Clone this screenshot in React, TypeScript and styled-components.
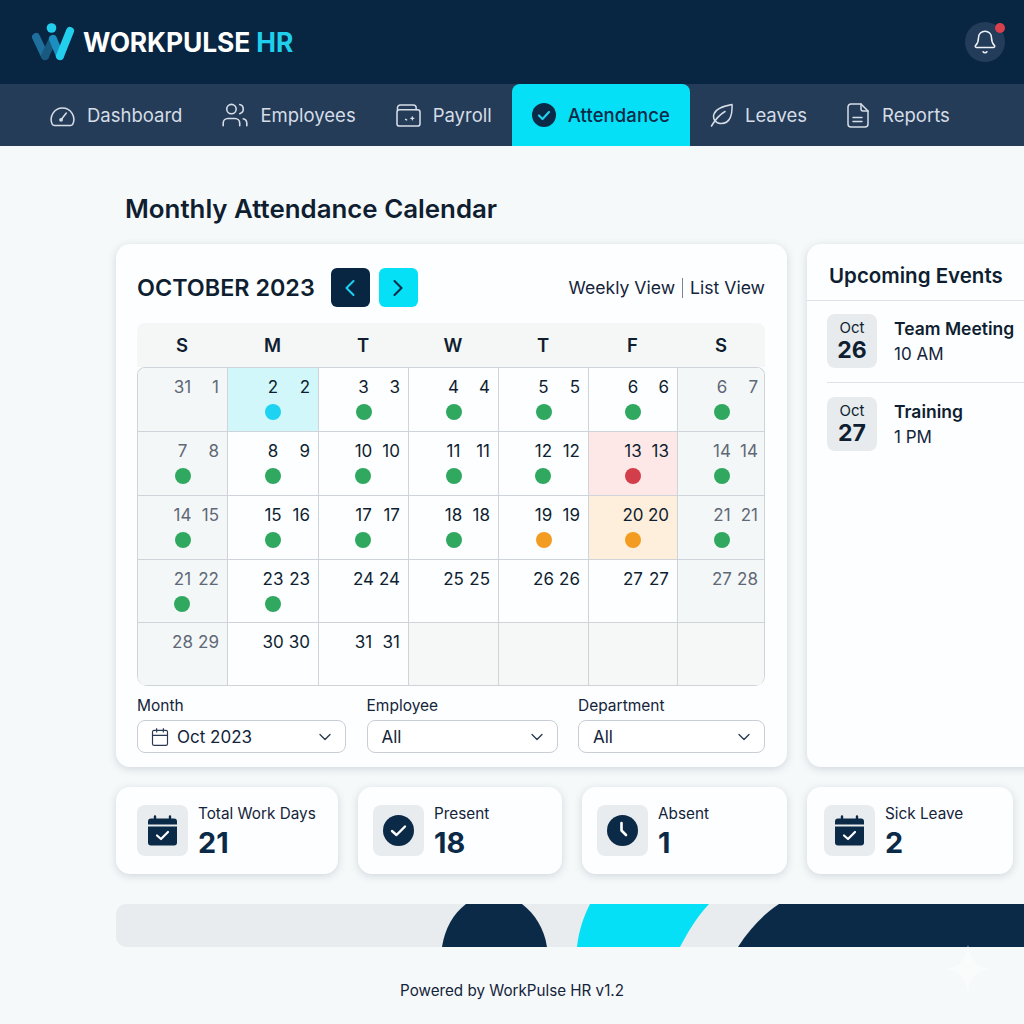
import * as React from 'react';
import styled, { createGlobalStyle } from 'styled-components';
import { Bell, Calendar, ChevronDown, ChevronLeft, ChevronRight, Users } from 'lucide-react';

const GlobalStyle = createGlobalStyle`
  html, body {
    margin: 0;
    padding: 0;
    width: 1024px;
    height: 1024px;
    overflow: hidden;
    background: #f6f9fa;
    font-family: "Inter", "Liberation Sans", sans-serif;
    color: #0f1e30;
  }
  * { box-sizing: border-box; }
`;

type Tone = 'plain' | 'weekend' | 'today' | 'absent' | 'late' | 'empty';
type DotColor = 'green' | 'cyan' | 'red' | 'orange';

interface Day {
  a?: string;
  b?: string;
  tone?: Tone;
  dot?: DotColor;
}

const weeks: Day[][] = [
  [
    { a: '31', b: '1', tone: 'weekend' },
    { a: '2', b: '2', tone: 'today', dot: 'cyan' },
    { a: '3', b: '3', dot: 'green' },
    { a: '4', b: '4', dot: 'green' },
    { a: '5', b: '5', dot: 'green' },
    { a: '6', b: '6', dot: 'green' },
    { a: '6', b: '7', tone: 'weekend', dot: 'green' },
  ],
  [
    { a: '7', b: '8', tone: 'weekend', dot: 'green' },
    { a: '8', b: '9', dot: 'green' },
    { a: '10', b: '10', dot: 'green' },
    { a: '11', b: '11', dot: 'green' },
    { a: '12', b: '12', dot: 'green' },
    { a: '13', b: '13', tone: 'absent', dot: 'red' },
    { a: '14', b: '14', tone: 'weekend', dot: 'green' },
  ],
  [
    { a: '14', b: '15', tone: 'weekend', dot: 'green' },
    { a: '15', b: '16', dot: 'green' },
    { a: '17', b: '17', dot: 'green' },
    { a: '18', b: '18', dot: 'green' },
    { a: '19', b: '19', dot: 'orange' },
    { a: '20', b: '20', tone: 'late', dot: 'orange' },
    { a: '21', b: '21', tone: 'weekend', dot: 'green' },
  ],
  [
    { a: '21', b: '22', tone: 'weekend', dot: 'green' },
    { a: '23', b: '23', dot: 'green' },
    { a: '24', b: '24' },
    { a: '25', b: '25' },
    { a: '26', b: '26' },
    { a: '27', b: '27' },
    { a: '27', b: '28', tone: 'weekend' },
  ],
  [
    { a: '28', b: '29', tone: 'weekend' },
    { a: '30', b: '30' },
    { a: '31', b: '31' },
    { tone: 'empty' },
    { tone: 'empty' },
    { tone: 'empty' },
    { tone: 'empty' },
  ],
];

const toneColors: Record<Tone, string> = {
  plain: 'transparent',
  weekend: '#f4f7f7',
  today: '#d2f7fb',
  absent: '#fde8e7',
  late: '#feefdc',
  empty: '#f6f8f8',
};

const dotColors: Record<DotColor, string> = {
  green: '#30a860',
  cyan: '#1ed3f2',
  red: '#d23f4b',
  orange: '#f29c22',
};

const Page = styled.div`
  width: 1024px;
  height: 1024px;
  overflow: hidden;
`;

const TopBar = styled.header`
  height: 84px;
  background: #082542;
  display: flex;
  align-items: center;
  justify-content: space-between;
  padding: 0 19px 0 31px;
`;

const Brand = styled.div`
  display: flex;
  align-items: center;
  gap: 8px;
`;

const BrandName = styled.div`
  font-size: 26.4px;
  font-weight: 700;
  letter-spacing: -0.1px;
  color: #ffffff;
  span { color: #1fd0ee; }
`;

const BellButton = styled.div`
  position: relative;
  width: 40px;
  height: 40px;
  border-radius: 50%;
  background: #233c59;
  color: #eef2f6;
  display: flex;
  align-items: center;
  justify-content: center;
`;

const BellDot = styled.span`
  position: absolute;
  top: 1px;
  right: 0;
  width: 10px;
  height: 10px;
  border-radius: 50%;
  background: #d8404c;
`;

const NavBar = styled.nav`
  height: 62px;
  background: #243c58;
  display: flex;
  padding-left: 30px;
`;

const NavItem = styled.div<{ $active?: boolean }>`
  display: flex;
  align-items: center;
  gap: 12px;
  padding: 0 20px;
  font-size: 18.5px;
  font-weight: ${p => (p.$active ? 500 : 400)};
  letter-spacing: ${p => (p.$active ? '0.1px' : '0')};
  color: ${p => (p.$active ? '#0b2a48' : '#d6dde6')};
  background: ${p => (p.$active ? '#05e0f6' : 'transparent')};
  border-radius: ${p => (p.$active ? '8px 8px 0 0' : '0')};
`;

const Main = styled.main`
  padding: 47px 0 0 116px;
`;

const PageTitle = styled.h1`
  margin: 0 0 19px 9px;
  font-size: 25.85px;
  line-height: 32px;
  font-weight: 600;
  color: #0f1e30;
`;

const Columns = styled.div`
  display: flex;
  gap: 20px;
`;

const Card = styled.section`
  background: #fdfeff;
  border-radius: 14px;
  box-shadow: 0 2px 8px rgba(40, 60, 90, 0.18);
`;

const CalendarCard = styled(Card)`
  width: 671px;
  height: 523px;
  padding: 24px 22px 0 21px;
`;

const CalendarHead = styled.div`
  display: flex;
  align-items: center;
  height: 39px;
  margin-bottom: 16px;
`;

const MonthTitle = styled.h2`
  margin: 0 16px 0 0;
  font-size: 23.35px;
  font-weight: 600;
  white-space: nowrap;
`;

const ArrowButton = styled.button<{ $dark?: boolean }>`
  width: 39px;
  height: 39px;
  margin-right: 9px;
  padding: 0;
  border: 0;
  border-radius: 6px;
  display: flex;
  align-items: center;
  justify-content: center;
  background: ${p => (p.$dark ? '#082542' : '#05e0f6')};
  color: ${p => (p.$dark ? '#1fd0ee' : '#0b2a48')};
`;

const ViewLinks = styled.div`
  margin-left: auto;
  font-size: 17.6px;
  color: #14243a;
  display: flex;
  align-items: center;
  gap: 7px;
`;

const ViewSep = styled.span`
  width: 1px;
  height: 20px;
  background: #7d8794;
`;

const WeekHead = styled.div`
  display: grid;
  grid-template-columns: 90px 91px 90px 90px 90px 89px 88px;
  height: 44px;
  background: #f5f7f7;
  border-radius: 8px 8px 0 0;
`;

const WeekDay = styled.div`
  display: flex;
  align-items: center;
  justify-content: center;
  font-size: 18.5px;
  font-weight: 600;
`;

const MonthGrid = styled.div`
  display: grid;
  grid-template-columns: 90px 91px 90px 90px 90px 89px 88px;
  grid-template-rows: 64px 64px 64px 63px 63px;
  width: 628px;
  border: 1px solid #cfd3da;
  border-width: 1px 1px 0 1px;
  border-radius: 8px 8px 10px 10px;
  overflow: hidden;
`;

const Cell = styled.div<{ $tone: Tone }>`
  display: grid;
  grid-template-columns: 1fr auto 1fr;
  grid-template-rows: 22px 16px;
  row-gap: 6px;
  align-content: start;
  padding: 8px 8px 0;
  background: ${p => toneColors[p.$tone]};
  border-right: 1px solid #cfd3da;
  border-bottom: 1px solid #cfd3da;
  font-size: 17px;
  line-height: 22px;
  color: ${p => (p.$tone === 'weekend' ? '#5f6876' : '#0f1e30')};
  &:nth-child(7n) { border-right: 0; }
`;

const DayNum = styled.span`
  grid-column: 2;
  grid-row: 1;
  justify-self: center;
`;

const DayAlt = styled.span`
  grid-column: 3;
  grid-row: 1;
  justify-self: end;
`;

const Dot = styled.span<{ $color: DotColor }>`
  grid-column: 2;
  grid-row: 2;
  justify-self: center;
  width: 16px;
  height: 16px;
  border-radius: 50%;
  background: ${p => dotColors[p.$color]};
`;

const Filters = styled.div`
  display: grid;
  grid-template-columns: 209px 191px 187px;
  column-gap: 20.5px;
  margin-top: 10px;
`;

const FilterLabel = styled.div`
  font-size: 15.5px;
  line-height: 19px;
  margin-bottom: 5px;
  color: #14243a;
`;

const SelectBox = styled.div<{ $icon?: boolean }>`
  height: 33px;
  display: flex;
  align-items: center;
  gap: 7px;
  padding: 0 10px 0 ${p => (p.$icon ? '12px' : '14px')};
  border: 1px solid #c9ced6;
  border-radius: 8px;
  background: #ffffff;
  font-size: 17px;
  color: #14243a;
  svg { color: #2a3a50; }
  svg:last-child { margin-left: auto; }
`;

const EventsCard = styled(Card)`
  width: 260px;
  flex-shrink: 0;
`;

const EventsTitle = styled.h2`
  margin: 0;
  height: 57px;
  padding: 6px 0 0 22px;
  display: flex;
  align-items: center;
  font-size: 20.5px;
  font-weight: 600;
  border-bottom: 1px solid #dfe3e9;
`;

const EventList = styled.div`
  padding: 13px 0 0 20px;
`;

const EventRow = styled.div<{ $divided?: boolean }>`
  display: flex;
  gap: 17px;
  padding-bottom: ${p => (p.$divided ? '14px' : '0')};
  margin-bottom: ${p => (p.$divided ? '14px' : '0')};
  border-bottom: ${p => (p.$divided ? '1px solid #dfe3e9' : '0')};
`;

const DateBadge = styled.div`
  width: 50px;
  height: 54px;
  border-radius: 8px;
  background: #e7ebee;
  display: flex;
  flex-direction: column;
  align-items: center;
  justify-content: center;
`;

const BadgeMonth = styled.span`
  font-size: 15px;
  line-height: 18px;
`;

const BadgeDay = styled.span`
  font-size: 23px;
  line-height: 26px;
  font-weight: 700;
`;

const EventText = styled.div`
  padding-top: 3px;
`;

const EventName = styled.div`
  font-size: 17.5px;
  line-height: 24px;
  font-weight: 600;
  white-space: nowrap;
`;

const EventTime = styled.div`
  font-size: 17px;
  line-height: 26px;
  color: #14243a;
`;

const StatRow = styled.div`
  display: grid;
  grid-template-columns: 222px 204px 205px 206px;
  column-gap: 20px;
  margin-top: 20px;
`;

const StatCard = styled(Card)<{ $inset: number }>`
  height: 87px;
  display: flex;
  align-items: center;
  gap: 10px;
  padding-left: ${p => p.$inset}px;
`;

const StatIcon = styled.div`
  width: 51px;
  height: 51px;
  border-radius: 8px;
  background: #e8ecef;
  display: flex;
  align-items: center;
  justify-content: center;
`;

const StatText = styled.div`
  padding-top: 3px;
`;

const StatLabel = styled.div`
  font-size: 15.3px;
  line-height: 20px;
  color: #14243a;
  white-space: nowrap;
`;

const StatValue = styled.div`
  font-size: 28.8px;
  line-height: 37px;
  font-weight: 700;
  color: #0b2a48;
`;

const Banner = styled.div`
  margin-top: 30px;
  height: 43px;
  background: #e8ecef;
  border-radius: 10px 0 0 10px;
  overflow: hidden;
  svg { display: block; }
`;

const Footer = styled.footer`
  position: relative;
  margin-left: -116px;
  height: 86px;
  display: flex;
  align-items: center;
  justify-content: center;
  font-size: 15.2px;
  color: #14243a;
`;

const Sparkle = styled.svg`
  position: absolute;
  left: 946px;
  top: -2px;
`;

function Logo() {
  return (
    <svg width="44" height="38" viewBox="0 0 44 38" fill="none">
      <path d="M5 14 L14 33" stroke="#1f6f9e" strokeWidth="8" strokeLinecap="round" />
      <path d="M14 33 L22 16" stroke="#17597f" strokeWidth="8" strokeLinecap="round" />
      <path d="M22 16 L29 33" stroke="#1b8fc0" strokeWidth="8" strokeLinecap="round" />
      <path d="M29 33 L39 8" stroke="#22d0ee" strokeWidth="8" strokeLinecap="round" />
      <circle cx="20.5" cy="5" r="4.8" fill="#22d0ee" />
    </svg>
  );
}

function GaugeIcon() {
  return (
    <svg width="25" height="24" viewBox="0 0 26 25" fill="none" stroke="currentColor" strokeWidth="1.6" strokeLinecap="round" strokeLinejoin="round">
      <path d="M4.5 23.5 A2.6 2.6 0 0 1 2.4 22.3 A11.8 11.8 0 1 1 23.6 22.3 A2.6 2.6 0 0 1 21.5 23.5 Z" />
      <path d="M11.5 17.5 L17 10.5" />
      <circle cx="11.5" cy="17.5" r="1.2" />
    </svg>
  );
}

function WalletIcon() {
  return (
    <svg width="25" height="23" viewBox="0 0 26 24" fill="none" stroke="currentColor" strokeWidth="1.6" strokeLinecap="round" strokeLinejoin="round">
      <path d="M1.5 6 V4 A3 3 0 0 1 4.5 1 H18 A3 3 0 0 1 21 4 V6" />
      <rect x="1" y="6" width="24" height="17" rx="2.5" />
      <path d="M10 16 L11 16.6" />
      <path d="M17 13.5 V16.5 M15.5 15 H18.5" strokeWidth="1.4" />
    </svg>
  );
}

function AttendanceIcon() {
  return (
    <svg width="24" height="24" viewBox="0 0 24 24">
      <circle cx="12" cy="12" r="12" fill="#0b2a48" />
      <path d="M7 12.5 L10.5 16 L17 9" fill="none" stroke="#22d0ee" strokeWidth="2.2" strokeLinecap="round" strokeLinejoin="round" />
    </svg>
  );
}

function LeafIcon() {
  return (
    <svg width="23" height="24" viewBox="0 0 23 24" fill="none" stroke="currentColor" strokeWidth="1.5" strokeLinecap="round" strokeLinejoin="round">
      <path d="M22 1.5 C22.5 10 21 21 10.5 20.5 C5 20 2.5 15 4 11 C6 5 14 3 22 1.5 Z" />
      <path d="M1.5 23 C5 17 9 12 15 8.5" />
    </svg>
  );
}

function ReportIcon() {
  return (
    <svg width="23" height="25" viewBox="0 0 23 25" fill="none" stroke="currentColor" strokeWidth="1.5" strokeLinecap="round" strokeLinejoin="round">
      <path d="M4 1 H14 L21 8 V21 A3 3 0 0 1 18 24 H4 A3 3 0 0 1 1 21 V4 A3 3 0 0 1 4 1 Z" />
      <path d="M14 1 V6 A2 2 0 0 0 16 8 H21" />
      <path d="M6 14.5 H15 M6 18.5 H15" />
    </svg>
  );
}

function CalendarCheckIcon() {
  return (
    <svg width="29" height="31" viewBox="0 0 29 31">
      <path d="M7 1.5 V5 M22 1.5 V5" stroke="#0b2a48" strokeWidth="2.4" strokeLinecap="round" />
      <path d="M3 3.5 H26 A3 3 0 0 1 29 6.5 V9.5 H0 V6.5 A3 3 0 0 1 3 3.5 Z" fill="#0b2a48" />
      <path d="M0 11.5 H29 V27.5 A3 3 0 0 1 26 30.5 H3 A3 3 0 0 1 0 27.5 Z" fill="#0b2a48" />
      <path d="M9 20.5 L13 24 L20 17" fill="none" stroke="#ffffff" strokeWidth="2.2" strokeLinecap="round" strokeLinejoin="round" />
    </svg>
  );
}

function CheckCircleIcon() {
  return (
    <svg width="31" height="31" viewBox="0 0 31 31">
      <circle cx="15.5" cy="15.5" r="15.5" fill="#0b2a48" />
      <path d="M9 16 L13.5 20 L22 11.5" fill="none" stroke="#ffffff" strokeWidth="2.4" strokeLinecap="round" strokeLinejoin="round" />
    </svg>
  );
}

function ClockIcon() {
  return (
    <svg width="31" height="31" viewBox="0 0 31 31">
      <circle cx="15.5" cy="15.5" r="15.5" fill="#0b2a48" />
      <path d="M14.5 8 V15.5 L19 20" fill="none" stroke="#ffffff" strokeWidth="2.6" strokeLinecap="round" strokeLinejoin="round" />
    </svg>
  );
}

const stats = [
  { label: 'Total Work Days', value: '21', inset: 21, icon: <CalendarCheckIcon /> },
  { label: 'Present', value: '18', inset: 15, icon: <CheckCircleIcon /> },
  { label: 'Absent', value: '1', inset: 15, icon: <ClockIcon /> },
  { label: 'Sick Leave', value: '2', inset: 17, icon: <CalendarCheckIcon /> },
];

export default function App() {
  return (
    <Page>
      <GlobalStyle />
      <TopBar>
        <Brand>
          <Logo />
          <BrandName>WORKPULSE <span>HR</span></BrandName>
        </Brand>
        <BellButton>
          <Bell size={26} strokeWidth={1.4} />
          <BellDot />
        </BellButton>
      </TopBar>

      <NavBar>
        <NavItem><GaugeIcon />Dashboard</NavItem>
        <NavItem><Users width={26} height={24} viewBox="1 2 22 20" strokeWidth={1.35} />Employees</NavItem>
        <NavItem><WalletIcon />Payroll</NavItem>
        <NavItem $active><AttendanceIcon />Attendance</NavItem>
        <NavItem><LeafIcon />Leaves</NavItem>
        <NavItem><ReportIcon />Reports</NavItem>
      </NavBar>

      <Main>
        <PageTitle>Monthly Attendance Calendar</PageTitle>
        <Columns>
          <CalendarCard>
            <CalendarHead>
              <MonthTitle>OCTOBER 2023</MonthTitle>
              <ArrowButton $dark><ChevronLeft size={28} strokeWidth={1.8} /></ArrowButton>
              <ArrowButton><ChevronRight size={28} strokeWidth={1.8} /></ArrowButton>
              <ViewLinks>Weekly View<ViewSep />List View</ViewLinks>
            </CalendarHead>

            <WeekHead>
              {['S', 'M', 'T', 'W', 'T', 'F', 'S'].map((d, i) => <WeekDay key={i}>{d}</WeekDay>)}
            </WeekHead>
            <MonthGrid>
              {weeks.flat().map((day, i) => (
                <Cell key={i} $tone={day.tone || 'plain'}>
                  {day.a && <DayNum>{day.a}</DayNum>}
                  {day.b && <DayAlt>{day.b}</DayAlt>}
                  {day.dot && <Dot $color={day.dot} />}
                </Cell>
              ))}
            </MonthGrid>

            <Filters>
              <div>
                <FilterLabel>Month</FilterLabel>
                <SelectBox $icon><Calendar size={20} strokeWidth={1.4} />Oct 2023<ChevronDown size={20} strokeWidth={1.6} /></SelectBox>
              </div>
              <div>
                <FilterLabel>Employee</FilterLabel>
                <SelectBox>All<ChevronDown size={20} strokeWidth={1.6} /></SelectBox>
              </div>
              <div>
                <FilterLabel>Department</FilterLabel>
                <SelectBox>All<ChevronDown size={20} strokeWidth={1.6} /></SelectBox>
              </div>
            </Filters>
          </CalendarCard>

          <EventsCard>
            <EventsTitle>Upcoming Events</EventsTitle>
            <EventList>
              <EventRow $divided>
                <DateBadge><BadgeMonth>Oct</BadgeMonth><BadgeDay>26</BadgeDay></DateBadge>
                <EventText>
                  <EventName>Team Meeting</EventName>
                  <EventTime>10 AM</EventTime>
                </EventText>
              </EventRow>
              <EventRow>
                <DateBadge><BadgeMonth>Oct</BadgeMonth><BadgeDay>27</BadgeDay></DateBadge>
                <EventText>
                  <EventName>Training</EventName>
                  <EventTime>1 PM</EventTime>
                </EventText>
              </EventRow>
            </EventList>
          </EventsCard>
        </Columns>

        <StatRow>
          {stats.map(s => (
            <StatCard key={s.label} $inset={s.inset}>
              <StatIcon>{s.icon}</StatIcon>
              <StatText>
                <StatLabel>{s.label}</StatLabel>
                <StatValue>{s.value}</StatValue>
              </StatText>
            </StatCard>
          ))}
        </StatRow>

        <Banner>
          <svg width="908" height="43" viewBox="0 0 908 43">
            <path d="M326 43 C329 24 337 10 350 0 H406 C419 10 428 24 431 43 Z" fill="#0b2a48" />
            <path d="M461 43 C463 25 468 12 474 0 H593 C580 14 572 28 564 43 Z" fill="#05e0f6" />
            <path d="M622 43 C634 24 648 10 663 0 H908 V43 Z" fill="#0b2a48" />
          </svg>
        </Banner>

        <Footer>
          Powered by WorkPulse HR v1.2
          <Sparkle width="44" height="48" viewBox="0 0 44 48">
            <path d="M22 0 C24 14 30 22 44 24 C30 26 24 34 22 48 C20 34 14 26 0 24 C14 22 20 14 22 0 Z" fill="#fafcfc" />
          </Sparkle>
        </Footer>
      </Main>
    </Page>
  );
}
